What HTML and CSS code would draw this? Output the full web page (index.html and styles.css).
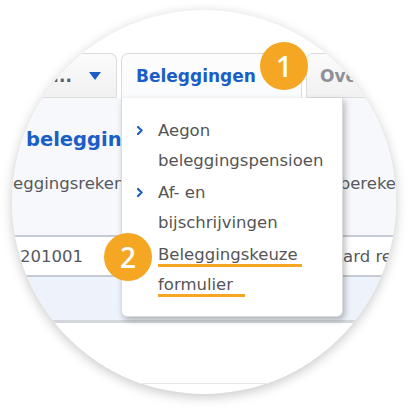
FILE: index.html
```html
<!DOCTYPE html>
<html lang="nl">
<head>
<meta charset="utf-8">
<title>Beleggingen</title>
<link rel="stylesheet" href="styles.css">
</head>
<body>
<div class="circle">
  <div class="tabs">
    <div class="tab tab-first"><span class="tab-label dark">Pensioen...</span><span class="caret"></span></div>
    <div class="tab tab-active"><span class="tab-label blue">Beleggingen</span></div>
    <div class="tab tab-last"><span class="tab-label muted">Overzicht</span></div>
  </div>
  <div class="panel">
    <h1 class="title">beleggingen</h1>
    <div class="sub">
      <span class="sub-left">Beleggingsrekening</span>
      <span class="sub-right">Rendementsberekening</span>
    </div>
  </div>
  <div class="row">
    <div class="cell-num"><span>0000201001</span></div>
    <span class="cell-right">Standaard rekening</span>
  </div>
  <div class="band"></div>
  <div class="foot"></div>

  <div class="menu">
    <div class="item">
      <span class="chev"><svg width="6" height="9" viewBox="0 0 6 9"><polyline points="1,1 4.6,4.5 1,8" fill="none" stroke="#1f5fc0" stroke-width="2.2" stroke-linecap="round" stroke-linejoin="round"/></svg></span>
      <span class="item-text">Aegon<br>beleggingspensioen</span>
    </div>
    <div class="item">
      <span class="chev"><svg width="6" height="9" viewBox="0 0 6 9"><polyline points="1,1 4.6,4.5 1,8" fill="none" stroke="#1f5fc0" stroke-width="2.2" stroke-linecap="round" stroke-linejoin="round"/></svg></span>
      <span class="item-text">Af- en<br>bijschrijvingen</span>
    </div>
    <div class="item">
      <span class="chev"></span>
      <span class="item-text"><span class="ul ul-a">Beleggingskeuze</span><br><span class="ul ul-b">formulier</span></span>
    </div>
  </div>

  <div class="badge badge-one">1</div>
  <div class="badge badge-two">2</div>
</div>
</body>
</html>
```

FILE: styles.css
```css
html, body {
  margin: 0;
  padding: 0;
  background: #ffffff;
}

body {
  font-family: "DejaVu Sans", Verdana, sans-serif;
  width: 408px;
  height: 408px;
  overflow: hidden;
}

.circle {
  position: relative;
  margin: 10px 0 0 12px;
  width: 384px;
  height: 384px;
  border-radius: 50%;
  overflow: hidden;
  background: #ffffff;
  box-shadow: 0 3px 12px rgba(0, 0, 0, 0.22);
}

/* tabs */
.tabs {
  display: flex;
  gap: 4px;
  margin-top: 43px;
  height: 45px;
}

.tab {
  box-sizing: border-box;
  height: 45px;
  display: flex;
  align-items: center;
  flex: none;
  border: 1.5px solid #dcdcdc;
  border-radius: 7px 7px 0 0;
  background: linear-gradient(#fbfbfb, #f1f1f1);
  white-space: nowrap;
  overflow: hidden;
}

.tab-first {
  width: 105px;
  justify-content: flex-end;
  padding-right: 15px;
  gap: 17px;
  border-left: none;
}

.tab-active {
  width: 181px;
  padding-left: 14px;
  border-bottom: none;
  background: linear-gradient(#fcfcfd, #fafbfc);
}

.tab-last {
  width: 110px;
  padding-left: 13px;
}

.tab-label {
  font-size: 17px;
  font-weight: bold;
}

.dark { color: #565d6d; }
.blue { color: #1b5ec6; }
.muted { color: #8d9099; }

.caret {
  width: 0;
  height: 0;
  border-left: 6.5px solid transparent;
  border-right: 6.5px solid transparent;
  border-top: 8px solid #1b5ec6;
  margin-top: 1px;
}

/* page content under the menu */
.panel {
  box-sizing: border-box;
  height: 137px;
  background: #f6f8fb;
  padding-top: 30px;
}

.title {
  margin: 0;
  padding-left: 14px;
  font-size: 19.5px;
  line-height: 24px;
  font-weight: bold;
  color: #1b5ec6;
  white-space: nowrap;
}

.sub {
  display: grid;
  grid-template-columns: 224px 1fr;
  margin-top: 20px;
  font-size: 16.5px;
  line-height: 24px;
  color: #565960;
  white-space: nowrap;
}

.sub-left {
  margin-left: -25px;
}

.row {
  display: grid;
  grid-template-columns: 71px 1fr;
  height: 38px;
  border-top: 2px solid #c6cad2;
  border-bottom: 2px solid #c6cad2;
  background: #ffffff;
  font-size: 16.5px;
  line-height: 36px;
  color: #565960;
  white-space: nowrap;
}

.cell-num {
  display: flex;
  justify-content: flex-end;
  padding-top: 2px;
}

.cell-right {
  padding-left: 202px;
  padding-top: 2px;
}

.band {
  height: 43px;
  background: #eef3fb;
}

.foot {
  height: 60px;
  border-top: 3px solid #d3d6dc;
  border-bottom: 1px solid #e7e7e7;
  background: #ffffff;
}

/* dropdown menu */
.menu {
  position: absolute;
  left: 109px;
  top: 88px;
  width: 222px;
  box-sizing: border-box;
  padding: 18px 0 16px 0;
  background: #ffffff;
  border: 1px solid #dadada;
  border-top: none;
  border-radius: 0 0 6px 6px;
  box-shadow: 2px 3px 6px rgba(0, 0, 0, 0.28);
}

.item {
  display: grid;
  grid-template-columns: 36px 1fr;
  font-size: 16.5px;
  line-height: 30px;
  color: #555555;
  white-space: nowrap;
}

.item + .item {
  margin-top: 2px;
}

.chev {
  padding-left: 15px;
  padding-top: 10px;
}

.chev svg {
  display: block;
}

.ul {
  background: linear-gradient(#f5a623, #f5a623) no-repeat left bottom;
  background-size: 100% 3px;
  padding-bottom: 3px;
}

.ul-a { padding-right: 4px; }
.ul-b { padding-right: 12px; }

/* numbered badges */
.badge {
  position: absolute;
  width: 48px;
  height: 48px;
  border-radius: 50%;
  background: #f5a623;
  color: #ffffff;
  display: flex;
  align-items: center;
  justify-content: center;
  font-family: "Open Sans", "DejaVu Sans", sans-serif;
  font-weight: 600;
  font-size: 28px;
  line-height: 1;
}

.badge-one {
  left: 248px;
  top: 32px;
}

.badge-two {
  left: 92px;
  top: 223px;
}
```
